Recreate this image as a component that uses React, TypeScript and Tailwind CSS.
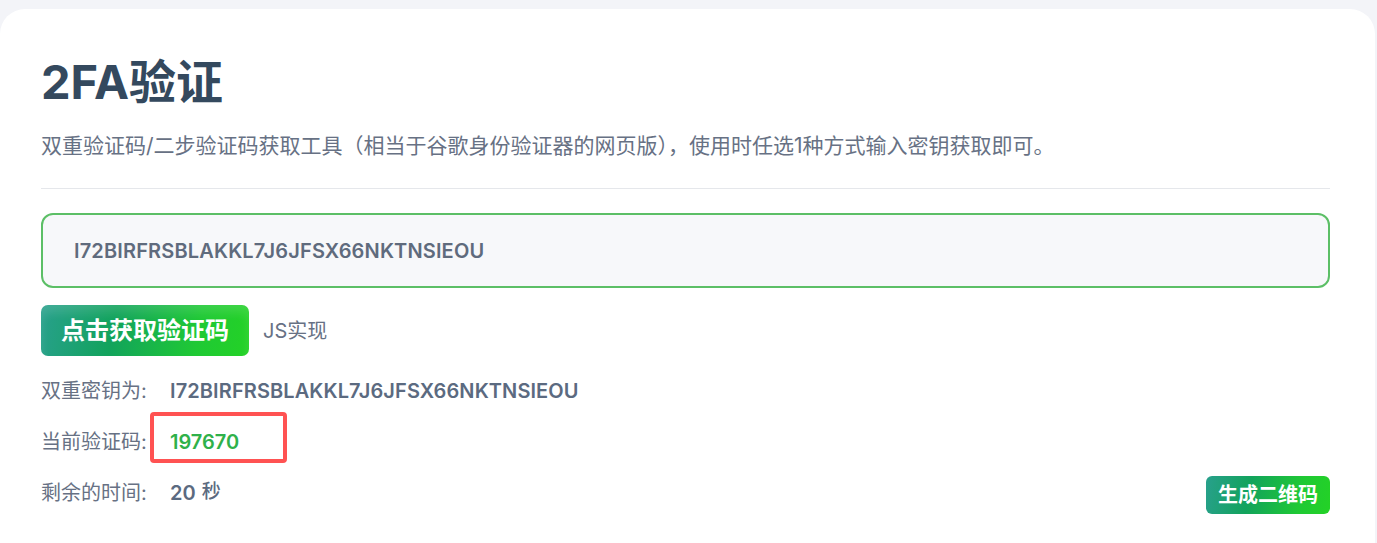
import React from "react";

const KEY = "I72BIRFRSBLAKKL7J6JFSX66NKTNSIEOU";

export default function App() {
  const font = { fontFamily: 'Inter, "Noto Sans CJK SC", sans-serif' };
  return (
    <div
      className="min-h-screen bg-[#f3f4f8] pt-[9px] pr-[2px] overflow-hidden"
      style={font}
    >
      <div className="bg-white rounded-[25px] pl-[41px] pr-[45px] pt-[45px] h-[560px]">
        <h1 className="text-[47px] leading-[56px] font-bold text-[#34495e]">
          2FA验证
        </h1>
        <p className="mt-[21px] text-[21px] leading-[30px] text-[#677184]">
          双重验证码/二步验证码获取工具（相当于谷歌身份验证器的网页版），使用时任选1种方式输入密钥获取即可。
        </p>
        <div className="mt-[27px] h-px bg-[#e5e7eb]" />
        <div className="mt-[24px] h-[75px] rounded-[12px] border-2 border-[#5cbf66] bg-[#f7f8fa] flex items-center pl-[31px]">
          <span className="text-[20px] font-semibold tracking-[0.15px] text-[#5f6b7d]">{KEY}</span>
        </div>
        <div className="mt-[17px] flex items-center">
          <button className="h-[51px] w-[208px] rounded-[7px] bg-[linear-gradient(100deg,#28a08c_0%,#12a35c_35%,#1fc934_75%,#24d226_100%)] shadow-[inset_0_8px_10px_rgba(255,255,255,0.12)] text-white text-[24px] font-bold flex items-center justify-center">
            点击获取验证码
          </button>
          <span className="ml-[14px] text-[20px] text-[#677184]">JS实现</span>
        </div>
        <div className="mt-[9px] h-[51px] flex items-center">
          <span className="w-[129px] text-[20px] text-[#677184]">双重密钥为:</span>
          <span className="text-[20px] font-semibold tracking-[0.1px] text-[#5b6a80]">{KEY}</span>
        </div>
        <div className="relative h-[51px] flex items-center">
          <span className="w-[129px] text-[20px] text-[#677184]">当前验证码:</span>
          <span className="text-[20px] font-semibold text-[#2fb14a]">197670</span>
          <div className="absolute left-[109px] top-[-4px] w-[137px] h-[51px] border-4 border-[#ff5252] rounded-[4px]" />
        </div>
        <div className="h-[51px] flex items-center justify-between">
          <div className="flex items-center">
            <span className="w-[129px] text-[20px] text-[#677184]">剩余的时间:</span>
            <span className="text-[20px] font-semibold text-[#5b6a80]">20</span>
            <span className="ml-[6px] text-[19px] font-medium text-[#5b6a80]">秒</span>
          </div>
          <button className="mt-[4px] h-[38px] w-[124px] rounded-[6px] bg-[linear-gradient(100deg,#28a08c_0%,#12a35c_35%,#1fc934_75%,#24d226_100%)] text-white text-[20px] font-bold flex items-center justify-center">
            生成二维码
          </button>
        </div>
      </div>
    </div>
  );
}
